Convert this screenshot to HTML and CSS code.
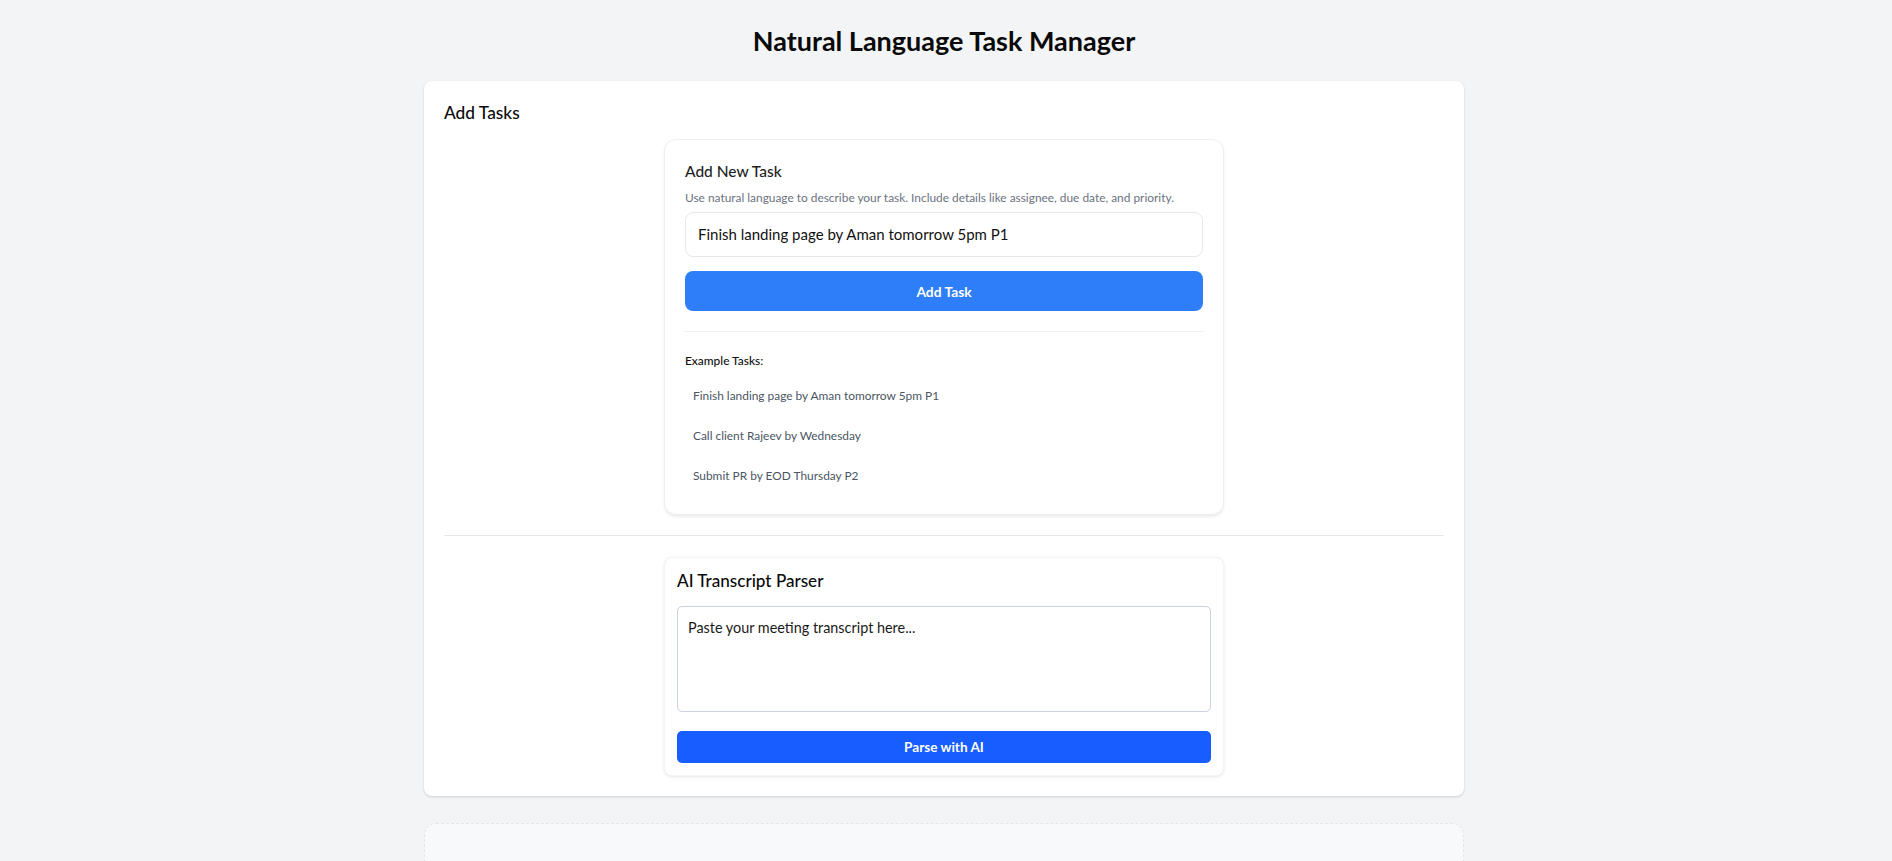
FILE: index.html
```html
<!DOCTYPE html>
<html lang="en">
<head>
<meta charset="utf-8">
<title>Natural Language Task Manager</title>
<link rel="stylesheet" href="styles.css">
</head>
<body>
<div class="page">
  <h1 class="page-title">Natural Language Task Manager</h1>

  <section class="main-card">
    <h2 class="section-title">Add Tasks</h2>

    <div class="task-card">
      <h3 class="task-card-title">Add New Task</h3>
      <p class="task-card-desc">Use natural language to describe your task. Include details like assignee, due date, and priority.</p>
      <div class="task-input">Finish landing page by Aman tomorrow 5pm P1</div>
      <button class="btn-add">Add Task</button>
      <hr class="soft-divider">
      <div class="examples-label">Example Tasks:</div>
      <ul class="examples">
        <li class="example">Finish landing page by Aman tomorrow 5pm P1</li>
        <li class="example">Call client Rajeev by Wednesday</li>
        <li class="example">Submit PR by EOD Thursday P2</li>
      </ul>
    </div>

    <hr class="section-divider">

    <div class="parser-card">
      <h3 class="parser-title">AI Transcript Parser</h3>
      <div class="transcript">Paste your meeting transcript here...</div>
      <button class="btn-parse">Parse with AI</button>
    </div>
  </section>

  <section class="empty-card"></section>
</div>
</body>
</html>
```

FILE: styles.css
```css
* { box-sizing: border-box; }

html, body {
  margin: 0;
  padding: 0;
  background: #f3f4f6;
  font-family: "Segoe UI", Lato, "Noto Sans", sans-serif;
  color: #111827;
}

body {
  padding-right: 4px;
}

.page {
  width: 1040px;
  margin: 0 auto;
  padding-top: 23px;
}

.page-title {
  margin: 0 0 22px;
  font-size: 27px;
  line-height: 36px;
  font-weight: 700;
  text-align: center;
  color: #0a0a0a;
}

.main-card {
  background: #ffffff;
  border-radius: 8px;
  box-shadow: 0 1px 3px rgba(0, 0, 0, 0.1), 0 1px 2px rgba(0, 0, 0, 0.06);
  padding: 20px;
}

.section-title {
  margin: 0 0 14px;
  font-size: 17.3px;
  line-height: 24px;
  font-weight: 500;
  color: #0a0a0a;
}

.task-card {
  width: 560px;
  margin: 0 auto;
  border: 1px solid #eeeeee;
  border-radius: 12px;
  padding: 20px;
  background: #fff;
  box-shadow: 0 2px 3px rgba(0, 0, 0, 0.08);
}

.task-card-title {
  margin: 0;
  font-size: 15.5px;
  line-height: 22px;
  font-weight: 500;
  color: #1f1f1f;
}

.task-card-desc {
  margin: 7px 0 5px;
  font-size: 11.9px;
  line-height: 18px;
  color: #6b7280;
}

.task-input {
  height: 45px;
  border: 1px solid #e5e7eb;
  border-radius: 8px;
  padding: 0 12px;
  font-size: 15px;
  line-height: 43px;
  color: #111;
}

.btn-add {
  display: block;
  width: 100%;
  height: 40px;
  margin-top: 14px;
  border: none;
  border-radius: 8px;
  background: #2d7ef8;
  color: #fff;
  font-family: inherit;
  font-size: 13.8px;
  font-weight: 700;
}

.soft-divider {
  border: none;
  border-top: 1px solid #f0f0f0;
  margin: 20px 0 0;
}

.examples-label {
  margin-top: 20px;
  font-size: 11.9px;
  line-height: 18px;
  font-weight: 500;
  color: #111;
}

.examples {
  list-style: none;
  margin: 8px 0 0;
  padding: 0;
  display: flex;
  flex-direction: column;
  gap: 4px;
}

.example {
  padding: 8px;
  font-size: 11.9px;
  line-height: 20px;
  color: #4b5563;
  border-radius: 6px;
}

.section-divider {
  border: none;
  border-top: 1px solid #e5e7eb;
  margin: 20px 0 21px;
}

.parser-card {
  width: 560px;
  margin: 0 auto;
  border: 1px solid #f5f5f5;
  border-radius: 8px;
  padding: 12px;
  background: #fff;
  box-shadow: 0 1px 3px rgba(0, 0, 0, 0.1);
}

.parser-title {
  margin: 0;
  font-size: 17.1px;
  line-height: 22px;
  font-weight: 500;
  color: #0a0a0a;
}

.transcript {
  margin-top: 14px;
  height: 106px;
  border: 1px solid #cdd3db;
  border-radius: 5px;
  padding: 10px;
  font-size: 14.4px;
  line-height: 21px;
  color: #1a1a1a;
}

.btn-parse {
  display: block;
  width: 100%;
  height: 32px;
  margin-top: 19px;
  border: none;
  border-radius: 5px;
  background: #175dff;
  color: #fff;
  font-family: inherit;
  font-size: 13.6px;
  font-weight: 700;
}

.empty-card {
  margin-top: 27px;
  height: 120px;
  border: 1px dashed #e2e5ea;
  border-radius: 12px;
  background: #f8f9fb;
}
```
